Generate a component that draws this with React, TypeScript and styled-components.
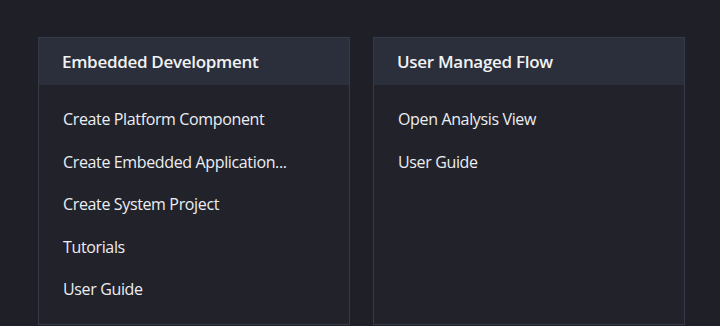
import React from "react";
import styled, { createGlobalStyle } from "styled-components";

const Global = createGlobalStyle`
  html, body { margin: 0; padding: 0; background: #1f1f27; }
  body { font-family: "Open Sans", "Noto Sans", sans-serif; }
`;

const Page = styled.div`
  display: grid;
  grid-template-columns: 312px 312px;
  column-gap: 23px;
  padding: 37px 0 0 38px;
  height: 326px;
  box-sizing: border-box;
  overflow: hidden;
`;

const Card = styled.section`
  display: flex;
  flex-direction: column;
  background: #22222b;
  border: 1px solid #343a48;
  height: 288px;
  box-sizing: border-box;
`;

const Header = styled.h2`
  margin: 0;
  height: 47px;
  display: flex;
  align-items: center;
  padding: 0 0 0 23px;
  background: #2a2f3b;
  color: #f1f2f4;
  font-size: 17px;
  font-weight: 600;
  letter-spacing: -0.3px;
`;

const List = styled.ul`
  list-style: none;
  margin: 0;
  padding: 13px 0 0 24px;
  display: flex;
  flex-direction: column;
`;

const Item = styled.li`
  height: 42.5px;
  display: flex;
  align-items: center;
  color: #eceef2;
  font-size: 16px;
  letter-spacing: -0.36px;
  cursor: pointer;
`;

const cards = [
  {
    title: "Embedded Development",
    items: [
      "Create Platform Component",
      "Create Embedded Application...",
      "Create System Project",
      "Tutorials",
      "User Guide",
    ],
  },
  {
    title: "User Managed Flow",
    items: ["Open Analysis View", "User Guide"],
  },
];

export default function App() {
  return (
    <>
      <Global />
      <Page>
        {cards.map((c) => (
          <Card key={c.title}>
            <Header>{c.title}</Header>
            <List>
              {c.items.map((i) => (
                <Item key={i}>{i}</Item>
              ))}
            </List>
          </Card>
        ))}
      </Page>
    </>
  );
}
